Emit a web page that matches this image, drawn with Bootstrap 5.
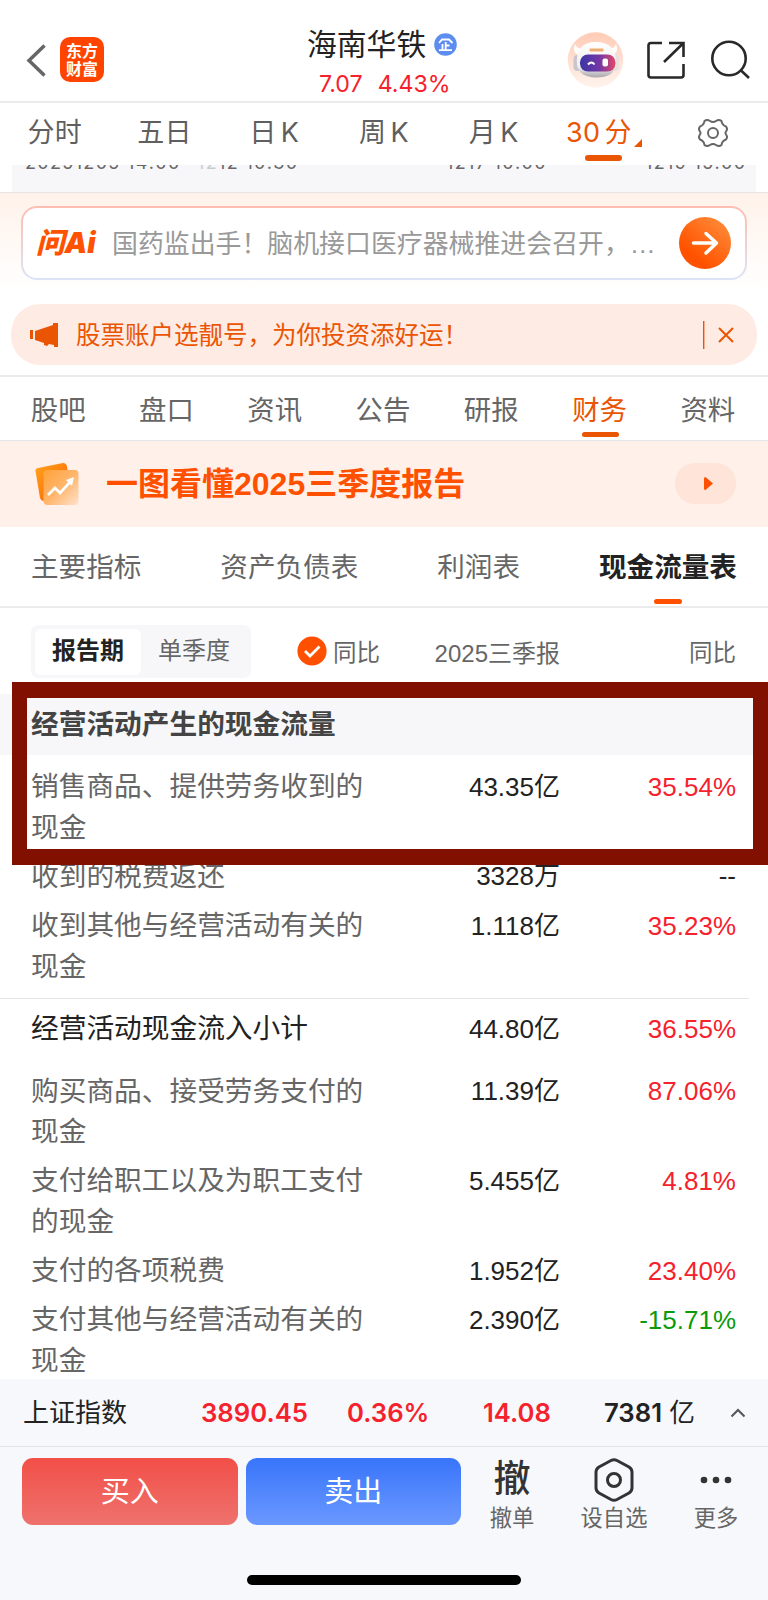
<!DOCTYPE html>
<html lang="zh-CN">
<head>
<meta charset="utf-8">
<meta name="viewport" content="width=device-width, initial-scale=1">
<title>海南华铁 - 现金流量表</title>
<link href="https://cdn.jsdelivr.net/npm/bootstrap@5.3.0/dist/css/bootstrap.min.css" rel="stylesheet">
<style>
body{font-family:"Liberation Sans","Noto Sans CJK SC",sans-serif;color:#222;background:#fff;line-height:1}
.phone{width:768px;height:1600px;overflow:hidden;position:relative}
svg{display:block;flex:none}
.inter{font-family:Inter,"Noto Sans CJK SC",sans-serif}
.up{color:#f5222d}.down{color:#0a9a0a}
.topbar{height:101px;display:grid;grid-template-columns:60px 44px 1fr auto;align-items:start}
.applogo{width:44px;height:45px;margin-top:37px;border-radius:10px;background:#ff4400;color:#fff;font:bold 16px/18px "Noto Sans CJK SC",sans-serif;text-align:center;padding-top:4px}
.title-block{width:152px;margin-left:203px;padding-top:28px}
.stock-name{font-size:29.8px;line-height:33px;white-space:nowrap}
.price{font-size:23.2px;line-height:24px;margin-top:11px;padding-left:12px;gap:15px;white-space:nowrap}
.head-icons{padding-right:17px}
.rule{height:2px;background:#ebebeb}
.period{height:62px;color:#5f5f5f;font-size:27px;text-align:center}
.period>div{padding-top:15px;line-height:29px;letter-spacing:.4px;word-spacing:-4px;white-space:nowrap;position:relative}
.on{color:#ea5504!important}
.tabline{position:absolute;height:5.5px;width:37px;border-radius:3px;background:#ea5504}
.axis{height:27px;margin:0 12px;background:#f7f7fa;overflow:hidden;color:#666;font-size:18px;line-height:18px}
.axis div{margin-top:-11px;padding-left:13px;letter-spacing:1.35px;white-space:nowrap}
.aizone{height:112px;padding:13px 21px 0;border-top:1.5px solid #e9e4e8;background:linear-gradient(#fff2ea,#fff 88%)}
.aibox{height:74px;border:2px solid transparent;border-radius:16px;background:linear-gradient(#fff,#fff) padding-box,linear-gradient(#ffbdb0,#dbe5f8) border-box;padding:0 14px 0 14px}
.aiword{font:italic 900 28.5px/30px Inter,"Noto Sans CJK SC",sans-serif;color:#ff5200;width:60px;letter-spacing:0;white-space:nowrap;margin-left:-1px}
.aitext{font-size:25.9px;line-height:36px;color:#999;white-space:nowrap;margin-left:16px;padding-top:2px}
.notice{height:61px;margin:0 11px;border-radius:29px;background:#feece4;color:#ea5504;font-size:24.5px;padding:0 23px 0 18px}
.sections{height:64px;padding:0 6px 0 4px;border-bottom:1px solid #e5e5ea;color:#666;font-size:27.4px;text-align:center}
.sections>div{padding-top:19px;line-height:30px;position:relative}
.report{height:86px;background:#fff0e9;color:#ff5000;font-size:32px;font-weight:700;padding:0 32px 0 35px}
.play{width:61px;height:41px;border-radius:20px;background:#fee4d9}
.statements{height:79px;padding:26px 31px 0 31px;color:#666;font-size:27.6px;line-height:30px}
.statements .now{color:#222;font-weight:700;position:relative}
.filters{height:86px;color:#666;position:relative}
.seg{width:220px;height:53px;margin:17px 0 0 31px;border-radius:7px;background:#f7f7fa;padding:4px;font-size:24px}
.seg>div{height:46px;border-radius:6px;line-height:43px;text-align:center;width:106px}
.seg .now{background:#fff;color:#222;font-weight:700}
.sect-head{height:61px;background:#f7f7fa;color:#444;font-size:27.7px;font-weight:700;line-height:62px;padding-left:31px}
.cash{padding:12px 0 0 31px;font-size:27.7px;color:#666;line-height:40.5px}
.line{display:grid;grid-template-columns:340px 189px 176px;padding-bottom:8.8px}
.line>span{padding-top:.5px;margin-bottom:-.5px}
.line b{font-weight:400;color:#222;font-size:26px;text-align:right;white-space:nowrap}
.line b.up{color:#f5222d}.line b.down{color:#0a9a0a}
.brk{border-bottom:1px solid #e5e5e5;padding-bottom:11.5px;margin:0 19px 0 -31px;padding-left:31px}
.sum{padding:9.500px 0 22px;color:#222}
.frame{position:absolute;left:12px;top:682px;width:756px;height:183px;border:solid #821000;border-width:16px 15px 16px 15px}
.dock{position:absolute;left:0;right:0;bottom:0;height:221px;background:#f7f8fb}
.index{height:68px;border-bottom:1.5px solid #e1e3e6;font-weight:600;font-size:25.7px;display:grid;grid-template-columns:178px 146px 136px 121px 131px 1fr;padding-left:23px;align-items:center;white-space:nowrap}
.trade{width:215.5px;height:67px;border-radius:11px;color:#fff;font-size:29px;line-height:69px;text-align:center}
.buy{background:linear-gradient(#f24f48,#ee726d)}.sell{background:linear-gradient(#3875fa,#6b98ff)}
.tool{width:102px;text-align:center;font-size:22.3px;color:#666}
.tool .pic{height:43px;display:flex;align-items:center;justify-content:center;margin-bottom:7px}
.home{width:274px;height:10px;border-radius:5px;background:#000;margin:45px auto 0}
</style>
<script src="https://cdn.jsdelivr.net/npm/bootstrap@5.3.0/dist/js/bootstrap.bundle.min.js"></script>
</head>
<body>
<div class="phone">
  <header class="topbar">
    <svg width="59" height="101"><path d="M44.500 45.500 29 60.500 44.500 75.500" fill="none" stroke="#666" stroke-width="3.500"/></svg>
    <div class="applogo">东方<br>财富</div>
    <div class="title-block">
      <div class="stock-name d-flex align-items-center">海南华铁
        <svg style="margin-left:8px" width="23" height="23" viewBox="0 0 23 23"><circle cx="11.500" cy="11.500" r="11.300" fill="#5e8df0"/><path d="M5 10 8 6.500H15L18.500 10M11.700 9V17M8.500 11V17M11.700 12.500H15.500M5 17.200H18" fill="none" stroke="#fff" stroke-width="1.800"/></svg>
      </div>
      <div class="price inter up d-flex"><span>7.07</span><span>4.43%</span></div>
    </div>
    <div class="head-icons">
      <svg width="184" height="100" viewBox="567 0 184 100">
        <defs><linearGradient id="halo" x2="0" y2="1"><stop stop-color="#ffcbb5"/><stop offset="1" stop-color="#fff4ee"/></linearGradient><linearGradient id="visor"><stop stop-color="#3b35a5"/><stop offset=".55" stop-color="#7337a5"/><stop offset="1" stop-color="#e54768"/></linearGradient><linearGradient id="shell" x2="0" y2="1"><stop stop-color="#fff"/><stop offset=".7" stop-color="#f0eeee"/><stop offset="1" stop-color="#aaa6ad"/></linearGradient></defs>
        <circle cx="595.500" cy="60" r="27.700" fill="url(#halo)"/>
        <path d="M575 44Q571 52 580 56L586 48Q577 50 575 44M616 44Q620 52 611 56L605 48Q614 50 616 44" fill="#fff"/>
        <rect x="573.500" y="55" width="9" height="16" rx="4" fill="#c9c5cc"/><rect x="610" y="55" width="9" height="16" rx="4" fill="#e6dfe0"/>
        <path d="M577 65Q575 42 596 42Q617 42 616 65Q614 77.500 596 77.500Q579 77 577 65Z" fill="url(#shell)"/>
        <rect x="589.500" y="48.500" width="14" height="3" rx="1" fill="#efab70"/>
        <rect x="580" y="54.500" width="35.500" height="17" rx="8" fill="url(#visor)"/>
        <path d="M588 64.500q3.500-4 6.500 0" stroke="#fff" stroke-width="2" fill="none"/><rect x="602.500" y="58.500" width="5.500" height="8" rx="2" fill="#fff"/>
        <g fill="none" stroke="#292929" stroke-width="2.600"><path d="M662 43H651Q648.500 43 648.500 45.500V75Q648.500 77.500 651 77.500H681Q683.500 77.500 683.500 75V64M669 43H683.500V57M683.500 43 664 62"/><circle cx="729" cy="58.500" r="16.700"/><path d="M740.500 70 749 78"/></g>
      </svg>
    </div>
  </header>
  <div class="rule"></div>
  <nav class="row g-0 period inter">
    <div class="col">分时</div><div class="col">五日</div><div class="col">日 K</div><div class="col">周 K</div><div class="col">月 K</div>
    <div class="col on" style="text-indent:-9px">30 分<svg class="position-absolute" style="left:85px;top:36px" width="8" height="8"><path d="M8 0V8H0Z" fill="#ea5504"/></svg><i class="tabline" style="left:36px;top:52px"></i></div>
    <div class="col d-flex justify-content-center"><svg width="30" height="30" viewBox="-15 -15 30 30" fill="none" stroke="#666" stroke-width="2"><path d="M-3-12Q0-10 3-12Q6-14 8.500-12Q9-8 13-6.500Q15-4 13-1.500Q12 0 13 1.500Q15 4 13 6.500Q9 8 8.500 12Q6 14 3 12Q0 10-3 12Q-6 14-8.500 12Q-9 8-13 6.500Q-15 4-13 1.500Q-12 0-13-1.500Q-15-4-13-6.500Q-9-8-8.500-12Q-6-14-3-12Z"/><circle r="5"/></svg></div>
  </nav>
  <div class="axis inter d-flex"><div style="width:172px">20251205 14:00</div><div style="width:249px"><span style="opacity:.3">12</span>12 10:30</div><div style="width:199px">1217 10:00</div><div>1219 15:00</div></div>
  <section class="aizone">
    <div class="aibox d-flex align-items-center">
      <div class="aiword">问Ai</div><div class="aitext">国药监出手！脑机接口医疗器械推进会召开，…</div>
      <svg class="ms-auto" width="52" height="52"><defs><linearGradient id="go" x1="1" x2=".35" y2=".8"><stop stop-color="#ff9340"/><stop offset="1" stop-color="#ff5200"/></linearGradient></defs><circle cx="26" cy="26" r="26" fill="url(#go)"/><path d="M14.500 26H37M27 16.500 37.500 26 27 36" fill="none" stroke="#fff" stroke-width="3.500" stroke-linecap="round" stroke-linejoin="round"/></svg>
    </div>
  </section>
  <div class="notice d-flex align-items-center">
    <svg width="30" height="26" fill="#ea5504"><path d="M1 8H4V17H1ZM6 9 24 3V1H29V25H25V23L20 22 18 24 15 23V21L6 18Z"/></svg>
    <span style="margin-left:17px;padding-top:4px">股票账户选靓号，为你投资添好运！</span>
    <svg class="ms-auto" width="31" height="28" fill="none" stroke="#ea5504"><path d="M.7 0V28" stroke-width="1.400"/><path d="M16 7 30 21M30 7 16 21" stroke-width="2"/></svg>
  </div>
  <div class="rule" style="margin-top:10px;height:1.500px"></div>
  <nav class="row g-0 sections"><div class="col">股吧</div><div class="col">盘口</div><div class="col">资讯</div><div class="col">公告</div><div class="col">研报</div><div class="col on">财务<i class="tabline" style="left:37px;top:55px"></i></div><div class="col">资料</div></nav>
  <div class="report d-flex align-items-center">
    <svg width="46" height="46" viewBox="35 461 46 46"><defs><linearGradient id="sheet" x2="1" y2="1"><stop stop-color="#ffa41c"/><stop offset="1" stop-color="#ff5a00"/></linearGradient><linearGradient id="card2" x2="1" y2="1"><stop stop-color="#ffa23a"/><stop offset=".5" stop-color="#ffb56b"/><stop offset="1" stop-color="#ffe2cc"/></linearGradient></defs><path d="M38 468 63 463Q66 463 67 466L71 497 43 501Q41 501 40 498L35.500 471Q35 469 38 468Z" fill="url(#sheet)"/><rect x="43.500" y="470" width="35" height="35" rx="4" fill="url(#card2)"/><path d="M48 495 55 488 60 493 70 482" stroke="#fff" stroke-width="2.700" fill="none"/><path d="M66 480 74 477 72 486Z" fill="#fff"/></svg>
    <span style="margin-left:25px;padding-top:1px">一图看懂2025三季度报告</span>
    <div class="play ms-auto d-flex align-items-center justify-content-center"><svg width="9" height="13" style="margin-left:5px"><path d="M0 1.500Q0 0 1.500 0L9 6.500 1.500 13Q0 13 0 11.500Z" fill="#ff5000"/></svg></div>
  </div>
  <nav class="statements d-flex justify-content-between"><span>主要指标</span><span>资产负债表</span><span>利润表</span><span class="now">现金流量表<i class="tabline" style="left:55px;top:46px;width:28px;background:#ff5000"></i></span></nav>
  <div class="rule"></div>
  <div class="filters d-flex">
    <div class="seg d-flex"><div class="now">报告期</div><div>单季度</div></div>
    <svg style="margin:28px 0 0 46px" width="30" height="30"><circle cx="15" cy="15" r="14.600" fill="#ff5000"/><path d="M8 15 13 20 22.500 10.500" fill="none" stroke="#fff" stroke-width="2.800"/></svg>
    <span style="font-size:23.500px;margin:34px 0 0 6px">同比</span>
    <span style="font-size:24px;width:180px;text-align:right;margin-top:34px">2025三季报</span>
    <span style="font-size:23.500px;width:176px;text-align:right;margin-top:34px">同比</span>
  </div>
  <div class="sect-head">经营活动产生的现金流量</div>
  <section class="cash">
    <div class="line"><span>销售商品、提供劳务收到的<br>现金</span><b>43.35亿</b><b class="up">35.54%</b></div>
    <div class="line"><span>收到的税费返还</span><b>3328万</b><b>--</b></div>
    <div class="line brk"><span>收到其他与经营活动有关的<br>现金</span><b>1.118亿</b><b class="up">35.23%</b></div>
    <div class="line sum"><span>经营活动现金流入小计</span><b>44.80亿</b><b class="up">36.55%</b></div>
    <div class="line"><span>购买商品、接受劳务支付的<br>现金</span><b>11.39亿</b><b class="up">87.06%</b></div>
    <div class="line"><span>支付给职工以及为职工支付<br>的现金</span><b>5.455亿</b><b class="up">4.81%</b></div>
    <div class="line"><span>支付的各项税费</span><b>1.952亿</b><b class="up">23.40%</b></div>
    <div class="line"><span>支付其他与经营活动有关的<br>现金</span><b>2.390亿</b><b class="down">-15.71%</b></div>
  </section>
  <div class="frame"></div>
  <footer class="dock">
    <div class="index inter"><span style="font-weight:400;font-size:26px">上证指数</span><span class="up">3890.45</span><span class="up">0.36%</span><span class="up">14.08</span><span>7381<span style="font-weight:400"> 亿</span></span><svg style="margin-left:-5px" width="16" height="10"><path d="M1.500 8.500 8 2 14.500 8.500" fill="none" stroke="#555" stroke-width="2"/></svg></div>
    <div class="d-flex" style="padding:11px 0 0 22px">
      <div class="trade buy">买入</div><div class="trade sell" style="margin-left:8px">卖出</div>
      <div class="tool"><div class="pic" style="font-size:37px;font-weight:500;color:#333">撤</div>撤单</div>
      <div class="tool"><div class="pic"><svg width="40" height="44" viewBox="0 0 40 44" fill="none" stroke="#333" stroke-width="3"><path d="M17 2.500Q20 1 23 2.500L35 9Q38 11 38 14V30Q38 33 35 35L23 41.500Q20 43 17 41.500L5 35Q2 33 2 30V14Q2 11 5 9Z"/><circle cx="20" cy="22" r="6.500"/></svg></div>设自选</div>
      <div class="tool"><div class="pic"><svg width="32" height="8" fill="#333"><circle cx="4" cy="4" r="3.300"/><circle cx="16" cy="4" r="3.300"/><circle cx="28" cy="4" r="3.300"/></svg></div>更多</div>
    </div>
    <div class="home"></div>
  </footer>
</div>
</body>
</html>
